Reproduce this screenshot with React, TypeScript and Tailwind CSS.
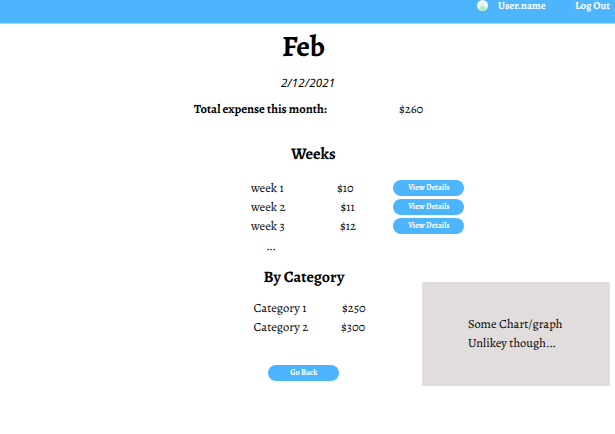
import React from "react";

const weeks = [
  { name: "week 1", amount: "$10", indent: "ml-[52px]" },
  { name: "week 2", amount: "$11", indent: "ml-[55.5px]" },
  { name: "week 3", amount: "$12", indent: "ml-[55px]" },
];

const categories = [
  { name: "Category 1", amount: "$250", indent: "ml-[34.5px]" },
  { name: "Category 2", amount: "$300", indent: "ml-[33.5px]" },
];

function PillButton({ children }: { children: React.ReactNode }) {
  return (
    <button className="flex h-4 w-[71px] shrink-0 items-center justify-center rounded-full bg-[#4cb5fd] text-[8px] font-bold leading-none text-white">
      {children}
    </button>
  );
}

function Avatar() {
  return (
    <svg className="size-[11px]" viewBox="0 0 11 11">
      <circle cx="5.5" cy="5.5" r="5.5" fill="#f6f6f4" />
      <circle cx="5.5" cy="4.2" r="1.9" fill="#d9f3df" />
      <path d="M2.3 9.7V8.2Q2.3 6 5.5 6T8.7 8.2V9.7Q5.5 12 2.3 9.7Z" fill="#a9ecc0" />
    </svg>
  );
}

export default function App() {
  return (
    <div className="h-[434px] w-[615px] bg-white font-['Alegreya','Liberation_Serif',serif] text-black [text-rendering:geometricPrecision]">
      <header className="flex h-6 items-start border-b border-[#a5dafe] bg-[#4cb5fd] pl-[477px] text-[10.6px] font-bold leading-3 text-white">
        <Avatar />
        <span className="ml-[10px] w-[77px] whitespace-nowrap">User.name</span>
        <span className="whitespace-nowrap">Log Out</span>
      </header>

      <main className="flex h-[410px] flex-col">
        <h1 className="ml-[282px] mt-[7px] h-8 text-[29.5px] font-bold leading-8">Feb</h1>
        <p className="ml-[281px] mt-[13px] h-4 font-['Noto_Sans',sans-serif] text-[11.5px] italic leading-4 tracking-[0.2px]">
          2/12/2021
        </p>
        <div className="ml-[194px] mt-[8px] flex h-5 text-[12.5px] leading-5">
          <span className="w-[205px] font-bold">Total expense this month:</span>
          <span>$260</span>
        </div>

        <h2 className="ml-[291px] mt-[22px] h-6 text-[16.3px] font-bold leading-6">Weeks</h2>
        <ul className="ml-[251px] mt-[12px] text-[12.5px]">
          {weeks.map((week) => (
            <li key={week.name} className="flex h-[19.4px] items-center leading-[19.4px]">
              <span className="w-[34px] whitespace-nowrap pt-[1.4px]">{week.name}</span>
              <span className="flex w-[108.4px] pt-[1.4px]">
                <span className={week.indent}>{week.amount}</span>
              </span>
              <PillButton>View Details</PillButton>
            </li>
          ))}
          <li className="ml-[15px] h-[19px] leading-[21px] tracking-[-0.7px]">...</li>
        </ul>

        <div className="flex">
          <section className="w-[422px] shrink-0">
            <h2 className="ml-[263.5px] mt-[9.5px] h-6 text-[16px] font-bold leading-6">By Category</h2>
            <ul className="ml-[253.5px] mt-[10.2px] text-[12.5px]">
              {categories.map((category) => (
                <li key={category.name} className="flex h-[19.2px] leading-[19px]">
                  <span className="w-[54px] whitespace-nowrap">{category.name}</span>
                  <span className={category.indent}>{category.amount}</span>
                </li>
              ))}
            </ul>
            <div className="ml-[268.4px] mt-[28px]">
              <PillButton>Go Back</PillButton>
            </div>
          </section>
          <aside className="mt-[26.8px] h-[104px] w-[188.4px] bg-[#e1dddc] pl-[46px] pt-[33px] text-[12.5px] leading-[19.3px]">
            <p>Some Chart/graph</p>
            <p>
              Unlikey though<span className="tracking-[-0.7px]">...</span>
            </p>
          </aside>
        </div>
      </main>
    </div>
  );
}
